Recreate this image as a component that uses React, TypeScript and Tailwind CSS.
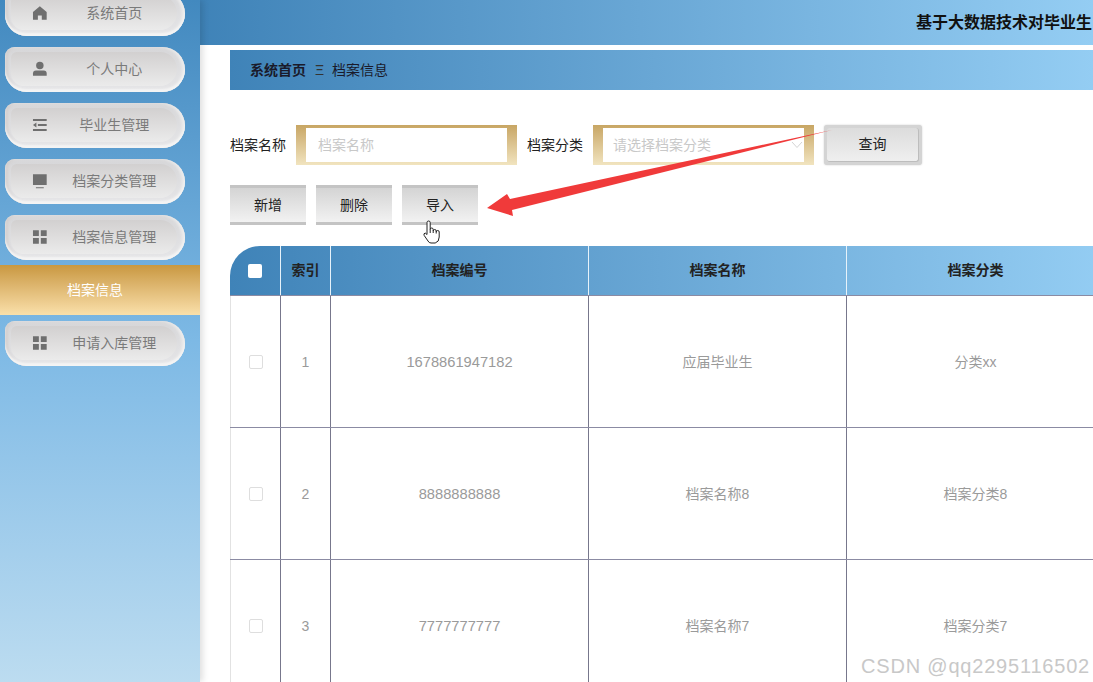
import type { ReactNode } from 'react';

const HomeIcon = () => (
  <svg viewBox="0 0 16 16" className="w-[16px] h-[16px] fill-[#6f6f6f]">
    <path d="M8 1 L15 7 V15 H10 V10.5 H6 V15 H1 V7 Z" />
  </svg>
);

const UserIcon = () => (
  <svg viewBox="0 0 16 16" className="w-[16px] h-[16px] fill-[#6f6f6f]">
    <circle cx="8" cy="4.5" r="3.8" />
    <path d="M1 15 V12.5 Q1 9.5 4 9.5 H12 Q15 9.5 15 12.5 V15 Z" />
  </svg>
);

const ListIcon = () => (
  <svg viewBox="0 0 16 16" className="w-[16px] h-[16px] fill-[#6f6f6f]">
    <path d="M1 2 H15 V4 H1 Z M6 7 H15 V9 H6 Z M1 12 H15 V14 H1 Z M4.5 5.5 V10.5 L1 8 Z" />
  </svg>
);

const MonitorIcon = () => (
  <svg viewBox="0 0 16 16" className="w-[16px] h-[16px] fill-[#6f6f6f]">
    <path d="M1 1 H15 V12 H1 Z M4 14.5 H12 V15.5 H4 Z" />
  </svg>
);

const GridIcon = () => (
  <svg viewBox="0 0 16 16" className="w-[16px] h-[16px] fill-[#6f6f6f]">
    <path d="M1 1 H7 V7 H1 Z M9 1 H15 V7 H9 Z M1 9 H7 V15 H1 Z M9 9 H15 V15 H9 Z" />
  </svg>
);

const MenuButton = ({ icon, label, first }: { icon: ReactNode; label: string; first?: boolean }) => (
  <div
    className={`${first ? '-mt-[9px]' : ''} ml-[5px] w-[180px] h-[45px] pt-[5px] pb-[6px] pl-[6px] pr-[8px] rounded-tl-[10px] rounded-bl-[22px] rounded-r-[23px] bg-gradient-to-b from-[#d6d6d8] to-[#e6e6e8] shadow-[inset_0_-3px_2px_#f4f4f4,inset_-3px_0_3px_#ececec,inset_3px_0_3px_#d2cfcf]`}
  >
    <div className="flex items-center h-full pl-[21px] rounded-tl-[6px] rounded-bl-[14px] rounded-r-[18px] bg-gradient-to-b from-[#d2d0d0] to-[#ebebeb]">
      {icon}
      <span className="w-[132px] pl-[4px] text-center text-[14px] text-[#7a7a7a]">{label}</span>
    </div>
  </div>
);

const Sidebar = () => (
  <aside className="relative z-10 w-[200px] h-[682px] shrink-0 flex flex-col bg-gradient-to-b from-[#4289bf] via-[#7db9e5] to-[#bcdcf0] shadow-[3px_0_6px_rgba(0,0,0,0.12)]">
    <MenuButton first icon={<HomeIcon />} label="系统首页" />
    <div className="mt-[11px] flex flex-col gap-[11px]">
      <MenuButton icon={<UserIcon />} label="个人中心" />
      <MenuButton icon={<ListIcon />} label="毕业生管理" />
      <MenuButton icon={<MonitorIcon />} label="档案分类管理" />
      <MenuButton icon={<GridIcon />} label="档案信息管理" />
    </div>
    <div className="mt-[5px] h-[50px] flex items-center justify-center pr-[10px] text-[14px] text-white bg-gradient-to-b from-[#c9983f] to-[#fae0aa]">
      档案信息
    </div>
    <div className="mt-[6px]">
      <MenuButton icon={<GridIcon />} label="申请入库管理" />
    </div>
  </aside>
);

const GoldField = ({ children }: { children: ReactNode }) => (
  <div className="w-[221px] h-[40px] px-[10px] py-[3px] bg-gradient-to-b from-[#c8a664] to-[#f1e4bf]">
    <div className="flex items-center h-full bg-white px-[12px] text-[14px] text-[#c8c8c8]">{children}</div>
  </div>
);

const ActionButton = ({ label }: { label: string }) => (
  <button className="w-[76px] h-[40px] border-t-[3px] border-b-[3px] border-[#c4c4c4] bg-gradient-to-b from-[#d4d4d4] to-[#f2f2f2] text-[14px] text-[#222]">
    {label}
  </button>
);

const rows = [
  { id: 1, code: '1678861947182', name: '应届毕业生', type: '分类xx' },
  { id: 2, code: '8888888888', name: '档案名称8', type: '档案分类8' },
  { id: 3, code: '7777777777', name: '档案名称7', type: '档案分类7' },
];

const gridCols = 'grid grid-cols-[50px_50px_258px_258px_258px] w-[874px]';

const DataTable = () => (
  <div className="mt-[21px] w-[863px] overflow-hidden">
    <div className={`${gridCols} h-[49px] rounded-tl-[30px] bg-gradient-to-r from-[#3f83b8] to-[#94cdf3] text-[14px] font-bold text-[#222]`}>
      <div className="flex items-center justify-center">
        <span className="w-[14px] h-[14px] rounded-[2px] bg-white" />
      </div>
      {['索引', '档案编号', '档案名称', '档案分类'].map((title) => (
        <div key={title} className="flex items-center justify-center border-l border-[#e6f2fa]">
          {title}
        </div>
      ))}
    </div>
    {rows.map((row) => (
      <div key={row.id} className={`${gridCols} h-[132px] border-t border-[#8b8ba3] text-[14px] text-[#9a9a9a]`}>
        <div className="flex items-center justify-center border-l border-[#e2e2e2]">
          <span className="w-[14px] h-[14px] border border-[#dedede] rounded-[2px]" />
        </div>
        <div className="flex items-center justify-center pt-[1px] border-l border-[#77778c]">{row.id}</div>
        <div className="flex items-center justify-center pt-[1px] border-l border-[#77778c] text-[14.7px]">{row.code}</div>
        <div className="flex items-center justify-center pt-[1px] border-l border-[#77778c]">{row.name}</div>
        <div className="flex items-center justify-center pt-[1px] border-l border-[#77778c]">{row.type}</div>
      </div>
    ))}
  </div>
);

export default function App() {
  return (
    <div
      className="relative flex w-[1093px] h-[682px] overflow-hidden bg-white"
      style={{ fontFamily: '"Liberation Sans", "Noto Sans CJK SC", sans-serif' }}
    >
      <Sidebar />

      <main className="w-[893px] h-[682px] overflow-hidden">
        <header className="h-[45px] pl-[716px] flex items-center bg-gradient-to-r from-[#3f83b8] to-[#94cdf3]">
          <span className="whitespace-nowrap text-[16px] font-bold text-[#111]">基于大数据技术对毕业生</span>
        </header>

        <div className="pl-[30px] pt-[5px]">
          <div className="h-[40px] flex items-center pl-[20px] text-[14px] text-[#1a1a2a] bg-gradient-to-r from-[#3f83b8] to-[#94cdf3]">
            <span className="font-bold">系统首页</span>
            <span className="w-[7px] ml-[9px] mr-[10px] text-[14px] leading-none text-[#333]">Ξ</span>
            <span>档案信息</span>
          </div>

          <div className="mt-[35px] flex items-center text-[14px] text-[#222]">
            <span className="w-[66px]">档案名称</span>
            <GoldField>档案名称</GoldField>
            <span className="ml-[10px] w-[66px]">档案分类</span>
            <GoldField>
              <span className="flex-1 -ml-[2px]">请选择档案分类</span>
              <svg viewBox="0 0 12 8" className="w-[12px] h-[8px] -mr-[11px] fill-none stroke-[#d4d4d4]">
                <path d="M1 1 L6 6.5 L11 1" />
              </svg>
            </GoldField>
            <button className="ml-[10px] w-[98px] h-[40px] p-[3px] rounded-[3px] bg-[#d4d4d4] shadow-[0_0_2px_rgba(0,0,0,0.2)]">
              <span className="flex items-center justify-center h-full rounded-[3px] bg-gradient-to-b from-[#dcdcdc] to-[#efefef] border-r border-b border-[#bdbdbd] text-[14px] text-[#222]">
                查询
              </span>
            </button>
          </div>

          <div className="mt-[20px] flex gap-[10px]">
            <ActionButton label="新增" />
            <ActionButton label="删除" />
            <ActionButton label="导入" />
          </div>

          <DataTable />
        </div>
      </main>

      {/* annotation arrow and mouse pointer drawn over the recording */}
      <svg className="absolute left-0 top-0 z-20 w-[1093px] h-[682px] pointer-events-none" viewBox="0 0 1093 682">
        <polygon points="832,130 510,199 507,194 487,208 513,216 512,210" fill="#f03a3a" />
      </svg>
      <svg
        viewBox="0 0 18 24"
        className="absolute left-[423px] top-[220px] z-20 w-[18px] h-[24px] fill-white stroke-[#222] pointer-events-none"
        strokeWidth={1}
      >
        <path d="M4 12 V2.6 a1.6 1.6 0 0 1 3.2 0 V9.5 a1.5 1.5 0 0 1 3 0 V11 a1.5 1.5 0 0 1 3 0 V12 a1.5 1.5 0 0 1 3 0 V17 q0 5 -4 6 H8 q-2 0 -3 -2 L1.2 15.5 q-1 -2 1 -2.5 L4 14.5 Z" />
        <path d="M7.2 9.5 V13 M10.2 11 V13 M13.2 12 V13.5" fill="none" />
      </svg>

      <div className="absolute right-[3px] top-[651px] z-20 text-[20px] tracking-[0.8px] text-[#c8c8c8]">
        CSDN @qq2295116502
      </div>
    </div>
  );
}
